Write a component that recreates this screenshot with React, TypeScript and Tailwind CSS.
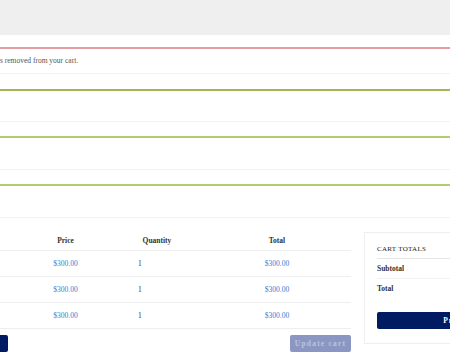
import React from "react";

const rows = [
  { price: "$300.00", qty: 1, total: "$300.00" },
  { price: "$300.00", qty: 1, total: "$300.00" },
  { price: "$300.00", qty: 1, total: "$300.00" },
];

function Notice({ color, children }: { color: string; children?: React.ReactNode }) {
  return (
    <div className={`border-t-2 ${color} border-b border-b-[#f2f2f2] flex items-center`}>
      {children}
    </div>
  );
}

export default function App() {
  return (
    <div className="w-[450px] h-[360px] overflow-hidden bg-white font-['Liberation_Serif',serif] text-[#333]">
      <div className="h-[35px] bg-[#efefef]" />

      <div className="ml-[-200px] w-[860px]">
        <div className="mt-[12px]">
          <Notice color="border-t-[#e39ca1]">
            <div className="h-[24px] flex items-center text-[7.5px] text-[#555] whitespace-nowrap">
              <span className="w-[200px] text-right shrink-0">“Beanie” wa</span>
              <span>s removed from your cart.</span>
            </div>
          </Notice>
        </div>
        <div className="mt-[15px]">
          <Notice color="border-t-[#a4b653]">
            <div className="h-[30px]" />
          </Notice>
        </div>
        <div className="mt-[14px]">
          <Notice color="border-t-[#b4cc6c]">
            <div className="h-[31px]" />
          </Notice>
        </div>
        <div className="mt-[14px]">
          <Notice color="border-t-[#b4cc6c]">
            <div className="h-[31px]" />
          </Notice>
        </div>

        <div className="mt-[14px] flex items-start gap-[13px]">
          {/* cart table */}
          <div className="w-[551px] shrink-0">
            <div className="grid grid-cols-[230px_71px_102px_148px] h-[19px] border-b border-[#eeeeee] items-center text-[7.5px] font-bold">
              <div className="pl-3">Product</div>
              <div className="text-center">Price</div>
              <div className="text-center pl-[10px]">Quantity</div>
              <div className="text-center">Total</div>
            </div>
            {rows.map((r, i) => (
              <div
                key={i}
                className="grid grid-cols-[230px_71px_102px_148px] h-[26px] border-b border-[#eeeeee] items-center text-[7.5px]"
              >
                <div />
                <div className="text-center text-[#2f80d4]">{r.price}</div>
                <div className="pl-[37px] text-[#333]">{r.qty}</div>
                <div className="text-center text-[#2f80d4]">{r.total}</div>
              </div>
            ))}
            <div className="mt-[6px] flex justify-between">
              <div className="flex gap-2">
                <input
                  className="w-[110px] h-[17px] border border-[#ddd] text-[7px] px-1"
                  placeholder="Coupon code"
                />
                <button className="w-[90px] h-[17px] bg-[#001b62] rounded-[2px] text-white text-[7px] font-bold tracking-[1px]">
                  Apply coupon
                </button>
              </div>
              <button className="w-[61px] h-[17px] bg-[#8b97c2] rounded-[2px] text-[#bcc3de] text-[7.5px] font-bold tracking-[1.2px] whitespace-nowrap">
                Update cart
              </button>
            </div>
          </div>

          {/* totals */}
          <div className="w-[242px] shrink-0 border border-[#eeeeee] px-[12px] pt-[7px] pb-[13px]">
            <div className="h-[19px] border-b border-[#e6e6e6] flex items-center text-[7px] tracking-[0.3px] text-[#222]">
              CART TOTALS
            </div>
            <div className="h-[20px] border-b border-[#f2f2f2] flex items-center text-[7.5px] font-bold text-[#333]">
              Subtotal
            </div>
            <div className="h-[20px] flex items-center text-[7.5px] font-bold text-[#333]">Total</div>
            <button className="mt-[13px] w-full h-[17px] bg-[#001b62] rounded-[2px] text-white text-[7.5px] font-bold tracking-[1px]">
              Proceed to checkout
            </button>
          </div>
        </div>
      </div>
    </div>
  );
}
